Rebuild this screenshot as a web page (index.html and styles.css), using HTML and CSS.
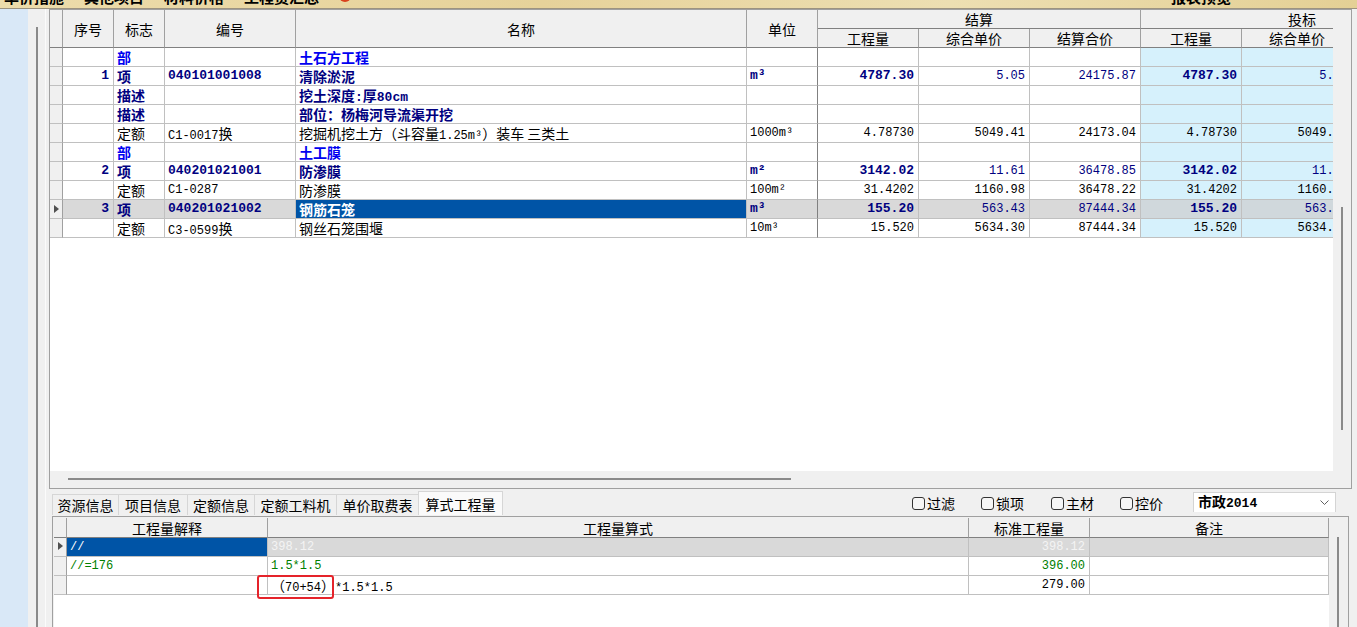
FILE: index.html
```html
<!DOCTYPE html>
<html lang="zh">
<head>
<meta charset="utf-8">
<title>算式工程量</title>
<link rel="stylesheet" href="styles.css">
</head>
<body>
<div class="topbar">
  <div class="tb-inner">
    <span>单价措施</span><span>其他项目</span><span>材料价格</span><span>工程费汇总</span><span class="tb-dot"></span><span class="tb-gap"></span><span>报表预览</span>
  </div>
</div>
<div class="main">
  <div class="lp-blue"></div>
  <div class="lp-strip"><div class="lp-thumb"></div></div>
  <div class="content">
    <div class="upper">
      <div class="upper-top">
        <div class="grid">
          <div class="ghead">
            <div class="hc tall c0"></div>
            <div class="hc tall c1">序号</div>
            <div class="hc tall c2">标志</div>
            <div class="hc tall c3">编号</div>
            <div class="hc tall c4">名称</div>
            <div class="hc tall c5">单位</div>
            <div class="hgroup">
              <div class="hc gt">结算</div>
              <div class="hsub">
                <div class="hc c6">工程量</div>
                <div class="hc c7">综合单价</div>
                <div class="hc c8">结算合价</div>
              </div>
            </div>
            <div class="hgroup">
              <div class="hc gt">投标</div>
              <div class="hsub">
                <div class="hc c9">工程量</div>
                <div class="hc c10">综合单价</div>
                <div class="hc c11">合价</div>
              </div>
            </div>
          </div>

          <div class="row rb">
            <div class="cell c0"></div><div class="cell c1"></div><div class="cell c2 b">部</div><div class="cell c3"></div><div class="cell c4 b">土石方工程</div><div class="cell c5"></div><div class="cell c6"></div><div class="cell c7"></div><div class="cell c8"></div><div class="cell c9"></div><div class="cell c10"></div><div class="cell c11"></div>
          </div>
          <div class="row ri">
            <div class="cell c0"></div><div class="cell c1 r mb">1</div><div class="cell c2 b">项</div><div class="cell c3 mb">040101001008</div><div class="cell c4 b">清除淤泥</div><div class="cell c5 mb">m³</div><div class="cell c6 r mb">4787.30</div><div class="cell c7 r m">5.05</div><div class="cell c8 r m">24175.87</div><div class="cell c9 r mb">4787.30</div><div class="cell c10 r m">5.05</div><div class="cell c11 r m">24175.87</div>
          </div>
          <div class="row ri">
            <div class="cell c0"></div><div class="cell c1"></div><div class="cell c2 b">描述</div><div class="cell c3"></div><div class="cell c4 b">挖土深度<span class="mb">:</span>厚<span class="mb">80cm</span></div><div class="cell c5"></div><div class="cell c6"></div><div class="cell c7"></div><div class="cell c8"></div><div class="cell c9"></div><div class="cell c10"></div><div class="cell c11"></div>
          </div>
          <div class="row ri">
            <div class="cell c0"></div><div class="cell c1"></div><div class="cell c2 b">描述</div><div class="cell c3"></div><div class="cell c4 b">部位：杨梅河导流渠开挖</div><div class="cell c5"></div><div class="cell c6"></div><div class="cell c7"></div><div class="cell c8"></div><div class="cell c9"></div><div class="cell c10"></div><div class="cell c11"></div>
          </div>
          <div class="row rq">
            <div class="cell c0"></div><div class="cell c1"></div><div class="cell c2">定额</div><div class="cell c3"><span class="m">C1-0017</span>换</div><div class="cell c4">挖掘机挖土方（斗容量<span class="m">1.25m³</span>）装车 三类土</div><div class="cell c5 m">1000m³</div><div class="cell c6 r m">4.78730</div><div class="cell c7 r m">5049.41</div><div class="cell c8 r m">24173.04</div><div class="cell c9 r m">4.78730</div><div class="cell c10 r m">5049.41</div><div class="cell c11 r m">24173.04</div>
          </div>
          <div class="row rb">
            <div class="cell c0"></div><div class="cell c1"></div><div class="cell c2 b">部</div><div class="cell c3"></div><div class="cell c4 b">土工膜</div><div class="cell c5"></div><div class="cell c6"></div><div class="cell c7"></div><div class="cell c8"></div><div class="cell c9"></div><div class="cell c10"></div><div class="cell c11"></div>
          </div>
          <div class="row ri">
            <div class="cell c0"></div><div class="cell c1 r mb">2</div><div class="cell c2 b">项</div><div class="cell c3 mb">040201021001</div><div class="cell c4 b">防渗膜</div><div class="cell c5 mb">m²</div><div class="cell c6 r mb">3142.02</div><div class="cell c7 r m">11.61</div><div class="cell c8 r m">36478.85</div><div class="cell c9 r mb">3142.02</div><div class="cell c10 r m">11.61</div><div class="cell c11 r m">36478.85</div>
          </div>
          <div class="row rq">
            <div class="cell c0"></div><div class="cell c1"></div><div class="cell c2">定额</div><div class="cell c3 m">C1-0287</div><div class="cell c4">防渗膜</div><div class="cell c5 m">100m²</div><div class="cell c6 r m">31.4202</div><div class="cell c7 r m">1160.98</div><div class="cell c8 r m">36478.22</div><div class="cell c9 r m">31.4202</div><div class="cell c10 r m">1160.98</div><div class="cell c11 r m">36478.22</div>
          </div>
          <div class="row ri sel">
            <div class="cell c0"><span class="arrow"></span></div><div class="cell c1 r mb">3</div><div class="cell c2 b">项</div><div class="cell c3 mb">040201021002</div><div class="cell c4 b">钢筋石笼</div><div class="cell c5 mb">m³</div><div class="cell c6 r mb">155.20</div><div class="cell c7 r m">563.43</div><div class="cell c8 r m">87444.34</div><div class="cell c9 r mb">155.20</div><div class="cell c10 r m">563.43</div><div class="cell c11 r m">87444.34</div>
          </div>
          <div class="row rq">
            <div class="cell c0"></div><div class="cell c1"></div><div class="cell c2">定额</div><div class="cell c3"><span class="m">C3-0599</span>换</div><div class="cell c4">钢丝石笼围堰</div><div class="cell c5 m">10m³</div><div class="cell c6 r m">15.520</div><div class="cell c7 r m">5634.30</div><div class="cell c8 r m">87444.34</div><div class="cell c9 r m">15.520</div><div class="cell c10 r m">5634.30</div><div class="cell c11 r m">87444.34</div>
          </div>
        </div>
        <div class="vscroll"><div class="vthumb"></div></div>
      </div>
      <div class="hscroll"><div class="hthumb"></div></div>
    </div>

    <div class="tabbar">
      <div class="tabs">
        <div class="tab t1">资源信息</div>
        <div class="tab t2">项目信息</div>
        <div class="tab t3">定额信息</div>
        <div class="tab t4">定额工料机</div>
        <div class="tab t5">单价取费表</div>
        <div class="tab t6 active">算式工程量</div>
      </div>
      <div class="opts">
        <label class="cb w69"><span class="box"></span>过滤</label>
        <label class="cb w70"><span class="box"></span>锁项</label>
        <label class="cb w69"><span class="box"></span>主材</label>
        <label class="cb w73"><span class="box"></span>控价</label>
        <div class="select"><span>市政<span class="mb">2014</span></span>
          <svg class="chev" width="9" height="5" viewBox="0 0 9 5"><polyline points="0.5,0.5 4.5,4.5 8.5,0.5" fill="none" stroke="#606060" stroke-width="1"/></svg>
        </div>
      </div>
    </div>

    <div class="lower">
      <div class="lgrid">
        <div class="lhead">
          <div class="hc lc0"></div>
          <div class="hc lc1">工程量解释</div>
          <div class="hc lc2">工程量算式</div>
          <div class="hc lc3">标准工程量</div>
          <div class="hc lc4">备注</div>
        </div>
        <div class="lrow lsel">
          <div class="cell lc0"><span class="arrow la"></span></div><div class="cell lc1 m">//</div><div class="cell lc2 m">398.12</div><div class="cell lc3 r m">398.12</div><div class="cell lc4"></div>
        </div>
        <div class="lrow green">
          <div class="cell lc0"></div><div class="cell lc1 m">//=176</div><div class="cell lc2 m">1.5*1.5</div><div class="cell lc3 r m">396.00</div><div class="cell lc4"></div>
        </div>
        <div class="lrow">
          <div class="cell lc0"></div><div class="cell lc1"></div><div class="cell lc2">（<span class="m">70+54</span>）<span class="m">*1.5*1.5</span></div><div class="cell lc3 r m">279.00</div><div class="cell lc4"></div>
        </div>
      </div>
      <div class="lvscroll"><div class="lvthumb"></div></div>
      <div class="redbox"></div>
    </div>
  </div>
</div>
</body>
</html>
```

FILE: styles.css
```css
* { box-sizing: border-box; }
html, body { margin: 0; padding: 0; }
body {
  width: 1357px;
  height: 627px;
  overflow: hidden;
  background: #f0f0f0;
  font-family: "Noto Sans CJK SC", "Noto Sans", sans-serif;
  font-size: 14px;
  color: #000;
}

/* top toolbar strip (clipped) */
.topbar {
  height: 9px;
  background: linear-gradient(90deg, #ecdcab, #e6d29a 40%, #eddfb2 70%, #e4d095);
  border-bottom: 1px solid #9c9380;
  overflow: hidden;
}
.tb-inner {
  display: flex;
  gap: 20px;
  margin-top: -11px;
  padding-left: 4px;
  font-weight: bold;
  font-size: 15px;
  line-height: 16px;
  white-space: nowrap;
}
.tb-dot {
  width: 12px; height: 12px; border-radius: 50%;
  background: #d8401c;
  margin-top: 1px;
}
.tb-gap { width: 780px; }

.main { display: flex; height: 618px; }
.lp-blue { width: 28px; background: #d9e8f7; }
.lp-strip {
  width: 18px;
  border-right: 1px solid #fbfbfb;
  margin-right: 3px;
  padding: 18px 0 0 8px;
}
.lp-thumb { width: 2px; height: 100%; background: #8a8a8a; }

.content { width: 1308px; display: flex; flex-direction: column; }

/* upper grid frame */
.upper {
  width: 1303px;
  height: 480px;
  border: 1px solid #a0a0a0;
  display: flex;
  flex-direction: column;
  background: #f0f0f0;
}
.upper-top { display: flex; height: 461px; }
.grid { width: 1283px; height: 461px; overflow: hidden; background: #fff; }
.vscroll { width: 18px; padding: 197px 0 0 8px; }
.vthumb { width: 2px; height: 223px; background: #8a8a8a; }
.hscroll { height: 17px; padding: 7px 0 0 18px; }
.hthumb { width: 723px; height: 2px; background: #8a8a8a; }

/* header */
.ghead { display: flex; width: 1413px; height: 38px; background: #f0f0f0; }
.hc {
  flex: none;
  height: 19px;
  border-right: 1px solid #a0a0a0;
  border-bottom: 1px solid #808080;
  display: flex;
  align-items: center;
  justify-content: center;
  white-space: nowrap;
  overflow: hidden;
  background: #f0f0f0;
  line-height: 18px;
}
.hc.tall { height: 38px; }
.hgroup { flex: none; width: 323px; display: flex; flex-direction: column; }
.hc.gt { width: 323px; }
.hsub { display: flex; }

/* column widths */
.c0 { width: 13px; }
.c1 { width: 51px; }
.c2 { width: 51px; }
.c3 { width: 131px; }
.c4 { width: 451px; }
.c5 { width: 71px; }
.c6 { width: 101px; }
.c7 { width: 111px; }
.c8 { width: 111px; }
.c9 { width: 101px; }
.c10 { width: 111px; }
.c11 { width: 111px; }

/* body rows */
.row { display: flex; width: 1413px; height: 19px; }
.cell {
  flex: none;
  height: 19px;
  border-right: 1px solid #c0c0c0;
  border-bottom: 1px solid #c0c0c0;
  padding: 0 3px;
  line-height: 18px;
  white-space: nowrap;
  overflow: hidden;
}
.cell.c0 { background: #f0f0f0; border-right-color: #a0a0a0; padding: 0; }
.cell.c5 { border-right-color: #808080; }
.row .c9, .row .c10, .row .c11 { background: #d6f1fc; }
.r { text-align: right; padding-right: 4px; }
.b { font-weight: bold; }
.m { font-family: "Liberation Mono", monospace; font-size: 12px; font-weight: normal; }
.mb { font-family: "Liberation Mono", monospace; font-size: 13px; font-weight: bold; }

.rb { color: #0000f0; }
.ri { color: #000080; }
.rq { color: #000; }

.sel .cell { background: #d9d9d9; }
.sel .c9, .sel .c10, .sel .c11 { background: #d0d8dc; }
.sel .cell.c0 { background: #f0f0f0; }
.sel .cell.c4 { background: #0054a6; color: #fff; }

.arrow {
  display: block;
  width: 0; height: 0;
  margin: 5px 0 0 4px;
  border-left: 5px solid #505050;
  border-top: 4px solid transparent;
  border-bottom: 4px solid transparent;
}

/* tab bar */
.tabbar { height: 27px; display: flex; padding-left: 3px; }
.tabs { display: flex; align-items: flex-end; padding-bottom: 1px; }
.tab {
  height: 21px;
  margin-right: -1px;
  border: 1px solid #d6d6d6;
  border-bottom: none;
  background: #f0f0f0;
  display: flex;
  align-items: center;
  justify-content: center;
  white-space: nowrap;
}
.tab.active { height: 24px; background: #fafafa; }
.t1 { width: 67px; }
.t2 { width: 70px; }
.t3 { width: 68px; }
.t4 { width: 83px; }
.t5 { width: 83px; }
.t6 { width: 85px; }

.opts { display: flex; align-items: center; margin-left: 410px; padding-top: 1px; }
.cb { display: flex; align-items: center; gap: 2px; }
.w69 { width: 69px; }
.w70 { width: 70px; }
.w73 { width: 73px; }
.box {
  width: 13px; height: 13px;
  border: 1px solid #333;
  border-radius: 3px;
  background: #f6f6f6;
}
.select {
  width: 143px;
  height: 20px;
  background: #fff;
  border: 1px solid #d4d4d4;
  border-bottom: none;
  display: flex;
  align-items: center;
  justify-content: space-between;
  padding: 0 6px 0 4px;
  font-weight: bold;
  line-height: 18px;
  margin-top: -2px;
}
.chev { flex: none; }

/* lower grid */
.lower {
  position: relative;
  flex: 1;
  margin-left: 3px;
  width: 1297px;
  border: 1px solid #a0a0a0;
  border-bottom: none;
  padding: 1px 1px 0 1px;
  display: flex;
  background: #f0f0f0;
}
.lgrid { width: 1275px; background: #fff; }
.lhead { display: flex; height: 20px; }
.lhead .hc { height: 20px; }
.lrow { display: flex; height: 19px; }
.lc0 { width: 13px; }
.lc1 { width: 201px; }
.lc2 { width: 701px; }
.lc3 { width: 121px; }
.lc4 { width: 239px; }
.cell.lc0 { background: #f0f0f0; border-right-color: #a0a0a0; padding: 0; }
.lsel .cell { background: #d9d9d9; color: #f4f4f4; }
.lsel .cell.lc0 { background: #f0f0f0; }
.lsel .cell.lc1 { background: #0054a6; color: #fff; }
.arrow.la { margin: 4px 0 0 4px; }
.green { color: #008000; }
.lvscroll { width: 18px; padding: 19px 0 0 8px; }
.lvthumb { width: 2px; height: 100%; background: #8a8a8a; }

.redbox {
  position: absolute;
  left: 204px;
  top: 58px;
  width: 77px;
  height: 24px;
  border: 2px solid #e5232a;
  border-radius: 3px;
}
```
